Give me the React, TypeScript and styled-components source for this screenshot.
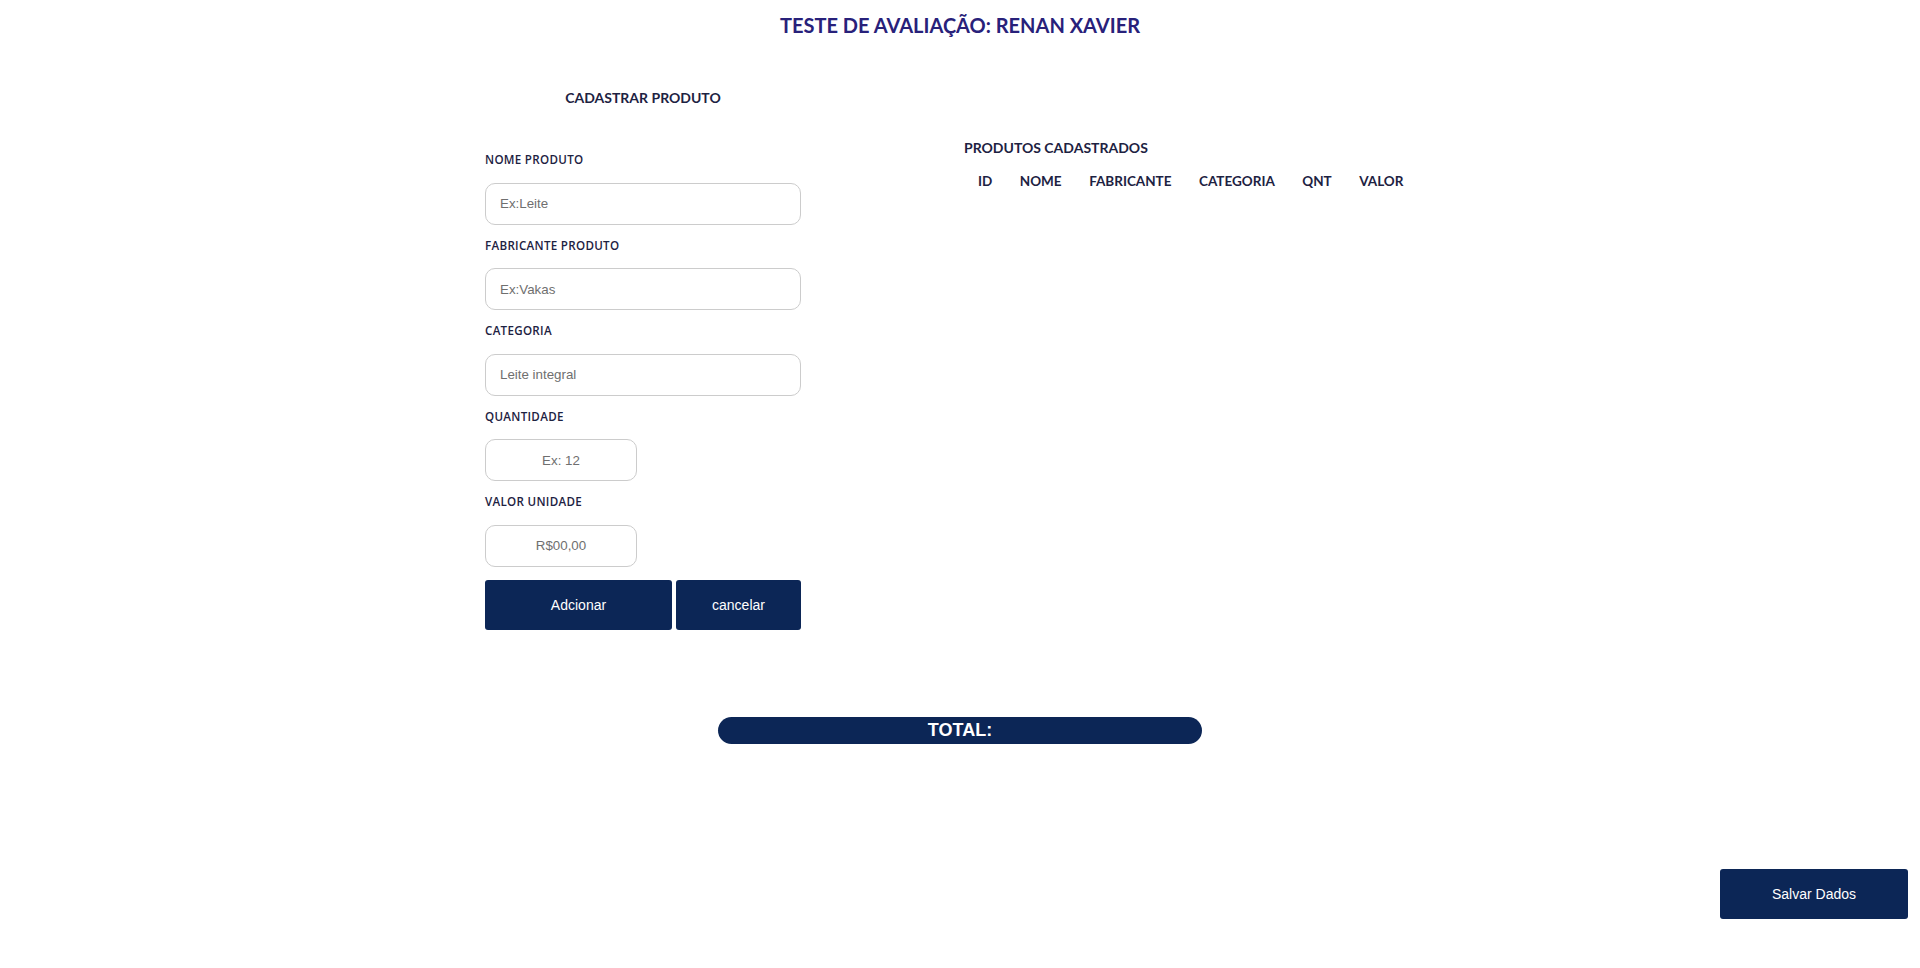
import React from "react";
import styled, { createGlobalStyle } from "styled-components";

const GlobalStyle = createGlobalStyle`
  html, body {
    margin: 0;
    padding: 0;
    background: #ffffff;
  }
  body {
    font-family: "Liberation Sans", Arial, sans-serif;
  }
  * { box-sizing: border-box; }
`;

const Page = styled.div`
  width: 1920px;
  min-height: 968px;
  display: flex;
  flex-direction: column;
`;

const Header = styled.header`
  height: 50px;
  display: flex;
  align-items: center;
  justify-content: center;
`;

const Title = styled.h1`
  margin: 0;
  font-family: Lato, "Noto Sans", sans-serif;
  font-weight: 700;
  font-size: 20px;
  line-height: 26px;
  color: #28217a;
`;

const Main = styled.main`
  width: 950px;
  margin: 0 auto;
  display: grid;
  grid-template-columns: 316px 1fr;
  column-gap: 163px;
`;

const FormColumn = styled.section`
  display: flex;
  flex-direction: column;
  padding-top: 38px;
`;

const SectionTitle = styled.h2<{ $center?: boolean }>`
  margin: 0;
  font-family: Lato, "Noto Sans", sans-serif;
  font-weight: 700;
  font-size: 14px;
  line-height: 20px;
  color: #1d2242;
  text-align: ${(p) => (p.$center ? "center" : "left")};
`;

const Form = styled.form`
  margin-top: 43px;
  display: flex;
  flex-direction: column;
  gap: 12px;
`;

const Field = styled.div`
  display: flex;
  flex-direction: column;
  gap: 13px;
`;

const Label = styled.label`
  font-family: "Open Sans", "Noto Sans", sans-serif;
  font-weight: 600;
  font-size: 11.6px;
  line-height: 18.5px;
  letter-spacing: 0.3px;
  color: #1d2242;
`;

const Input = styled.input<{ $short?: boolean }>`
  width: ${(p) => (p.$short ? "152px" : "316px")};
  height: 42px;
  border: 1px solid #cccccc;
  border-radius: 10px;
  padding: 0 14px;
  font-family: "Liberation Sans", Arial, sans-serif;
  font-size: 13.33px;
  color: #333;
  text-align: ${(p) => (p.$short ? "center" : "left")};
  outline: none;
  background: #fff;
  &::placeholder {
    color: #6f6f6f;
  }
`;

const ButtonRow = styled.div`
  margin-top: 1px;
  display: flex;
  gap: 4px;
`;

const Button = styled.button<{ $width: number }>`
  width: ${(p) => p.$width}px;
  height: 50px;
  border: none;
  border-radius: 3px;
  background: #0c2656;
  color: #ffffff;
  font-family: "Liberation Sans", Arial, sans-serif;
  font-size: 14px;
  cursor: pointer;
`;

const ListColumn = styled.section`
  padding-top: 88px;
  display: flex;
  flex-direction: column;
`;

const HeadRow = styled.div`
  margin-top: 13px;
  display: flex;
  gap: 27.5px;
  padding-left: 14px;
`;

const HeadCell = styled.span`
  font-family: Lato, "Noto Sans", sans-serif;
  font-weight: 700;
  font-size: 13.5px;
  line-height: 20px;
  color: #1d2242;
`;

const TotalBar = styled.div`
  margin: 87px auto 0;
  width: 484px;
  height: 27px;
  border-radius: 14px;
  background: #0c2656;
  color: #ffffff;
  display: flex;
  align-items: center;
  justify-content: center;
  font-family: "Liberation Sans", Arial, sans-serif;
  font-weight: 700;
  font-size: 18px;
`;

const Footer = styled.footer`
  margin-top: 125px;
  display: flex;
  justify-content: flex-end;
  padding-right: 12px;
`;

export default function App() {
  return (
    <>
      <GlobalStyle />
      <Page>
        <Header>
          <Title>TESTE DE AVALIAÇÃO: RENAN XAVIER</Title>
        </Header>
        <Main>
          <FormColumn>
            <SectionTitle $center>CADASTRAR PRODUTO</SectionTitle>
            <Form onSubmit={(e) => e.preventDefault()}>
              <Field>
                <Label>NOME PRODUTO</Label>
                <Input placeholder="Ex:Leite" />
              </Field>
              <Field>
                <Label>FABRICANTE PRODUTO</Label>
                <Input placeholder="Ex:Vakas" />
              </Field>
              <Field>
                <Label>CATEGORIA</Label>
                <Input placeholder="Leite integral" />
              </Field>
              <Field>
                <Label>QUANTIDADE</Label>
                <Input $short placeholder="Ex: 12" />
              </Field>
              <Field>
                <Label>VALOR UNIDADE</Label>
                <Input $short placeholder="R$00,00" />
              </Field>
              <ButtonRow>
                <Button type="submit" $width={187}>Adcionar</Button>
                <Button type="button" $width={125}>cancelar</Button>
              </ButtonRow>
            </Form>
          </FormColumn>
          <ListColumn>
            <SectionTitle>PRODUTOS CADASTRADOS</SectionTitle>
            <HeadRow>
              {["ID", "NOME", "FABRICANTE", "CATEGORIA", "QNT", "VALOR"].map((h) => (
                <HeadCell key={h}>{h}</HeadCell>
              ))}
            </HeadRow>
          </ListColumn>
        </Main>
        <TotalBar>TOTAL:</TotalBar>
        <Footer>
          <Button type="button" $width={188}>Salvar Dados</Button>
        </Footer>
      </Page>
    </>
  );
}
